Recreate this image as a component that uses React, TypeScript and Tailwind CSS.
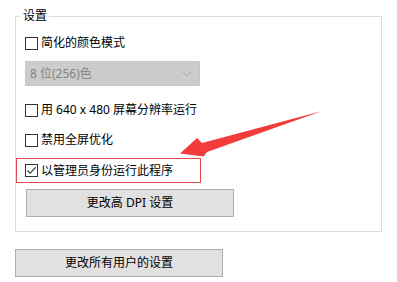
import React from "react";

function Box({ checked = false }: { checked?: boolean }) {
  return (
    <span className="flex h-[13px] w-[13px] shrink-0 items-center justify-center border border-[#333333] bg-white">
      {checked && (
        <svg width="11" height="11" viewBox="0 0 11 11" fill="none">
          <polyline points="1.5,5.5 4.2,8.3 9.6,2.4" stroke="#222" strokeWidth="1.1" />
        </svg>
      )}
    </span>
  );
}

function Row({ label, checked = false, className = "" }: { label: string; checked?: boolean; className?: string }) {
  return (
    <div className={`flex items-center gap-[3px] ${className}`}>
      <Box checked={checked} />
      <span className="leading-[16px] whitespace-nowrap">{label}</span>
    </div>
  );
}

export default function App() {
  return (
    <div className="relative flex h-[282px] w-[397px] flex-col overflow-hidden bg-white pl-[15px] pt-2 text-[12px] text-black font-['Noto_Sans','Noto_Sans_CJK_SC',sans-serif]">
      <fieldset className="w-[367px] border border-[#dcdcdc] px-[9px] pb-[14px]">
        <legend className="-ml-[5px] pl-[3px] pr-[2px] leading-[16px]">设置</legend>
        <div className="flex flex-col">
          <Row label="简化的颜色模式" className="mt-[11px] h-4" />
          <div className="mt-[10px] flex h-[25px] w-[175px] items-center justify-between border border-[#c6c6c6] bg-[#cccccc] pl-[4px] pr-[7px] text-[#838383]">
            <span className="leading-[16px]">8 位(256)色</span>
            <svg width="10" height="6" viewBox="0 0 10 6" fill="none">
              <polyline points="0.5,0.5 5,5 9.5,0.5" stroke="#a8a8a8" strokeWidth="1" />
            </svg>
          </div>
          <Row label="用 640 x 480 屏幕分辨率运行" className="mt-[16px] h-4" />
          <Row label="禁用全屏优化" className="mt-[14px] h-4" />
          <Row
            label="以管理员身份运行此程序"
            checked
            className="mt-[10px] -ml-[9px] h-[25px] w-[185px] border border-[#e0474c] pl-[8px]"
          />
          <button className="ml-[1px] mt-[6px] flex h-[28px] w-[208px] items-center justify-center border border-[#adadad] bg-[#e1e1e1] leading-[16px]">
            更改高 DPI 设置
          </button>
        </div>
      </fieldset>
      <button className="mt-[17px] flex h-[28px] w-[208px] items-center justify-center border border-[#adadad] bg-[#e1e1e1] leading-[16px]">
        更改所有用户的设置
      </button>
      <svg className="pointer-events-none absolute left-0 top-0" width="397" height="282" viewBox="0 0 397 282">
        <polygon
          points="180,153.5 197,138 202,143 322,111 207,152 203.5,156.5"
          fill="#f23b3b"
        />
      </svg>
    </div>
  );
}
